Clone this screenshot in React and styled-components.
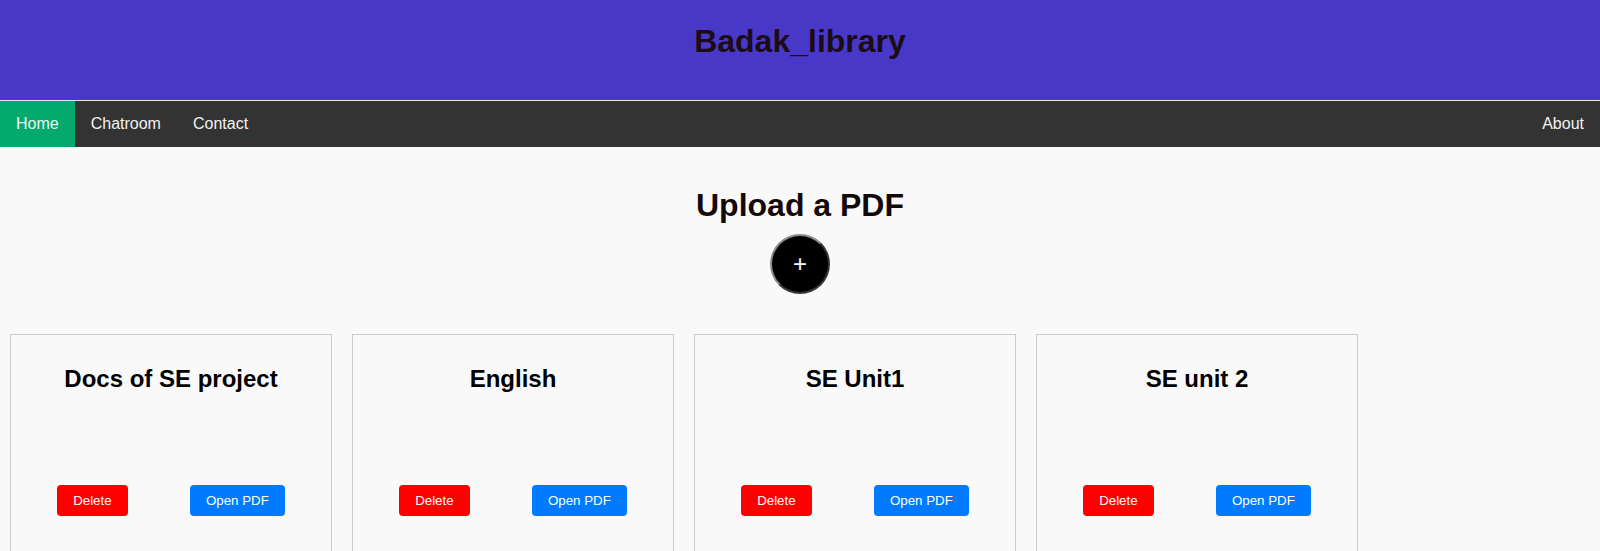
import React from 'react';
import styled, { createGlobalStyle } from 'styled-components';

const GlobalStyle = createGlobalStyle`
  body {
    margin: 0;
    background: #f9f9f9;
    font-family: "Liberation Sans", Arial, sans-serif;
  }
`;

const Header = styled.header`
  height: 77px;
  padding-top: 23px;
  background: #4838c8;
  border-bottom: 1px solid #e6e6f0;
  text-align: center;
`;

const SiteTitle = styled.h1`
  margin: 0;
  font-size: 32px;
  font-weight: bold;
  color: #1c0c14;
`;

const TopNav = styled.nav`
  display: flex;
  background: #333;
`;

const NavLink = styled.a`
  padding: 14px 16px;
  font-size: 16px;
  color: #f2f2f2;
  text-decoration: none;
  background: ${props => props.active ? '#04aa6d' : 'transparent'};
  margin-left: ${props => props.right ? 'auto' : '0'};
  cursor: pointer;
`;

const UploadSection = styled.section`
  padding-top: 40px;
  margin-bottom: 30px;
  display: flex;
  flex-direction: column;
  align-items: center;
`;

const UploadTitle = styled.h1`
  margin: 0 0 10px;
  font-size: 32px;
  color: #140808;
`;

const AddButton = styled.button`
  width: 60px;
  height: 60px;
  border-radius: 50%;
  background: #000;
  border: 2px outset #8a8a8a;
  color: #fff;
  font-size: 24px;
  font-family: "Liberation Sans", Arial, sans-serif;
  padding: 0;
  cursor: pointer;
`;

const CardList = styled.div`
  display: flex;
  flex-wrap: wrap;
`;

const Card = styled.div`
  box-sizing: border-box;
  width: 322px;
  margin: 10px;
  padding: 10px 15px;
  border: 1px solid #ccc;
  text-align: center;
`;

const CardTitle = styled.h2`
  margin: 20px 0 0;
  font-size: 24px;
  color: #000;
`;

const Actions = styled.div`
  display: flex;
  justify-content: space-around;
  margin: 92px 0 40px;
`;

const ActionButton = styled.button`
  padding: 8px 16px;
  border: none;
  border-radius: 4px;
  font-family: "Liberation Sans", Arial, sans-serif;
  font-size: 13.333px;
  color: #fff;
  background: ${props => props.danger ? '#ff0000' : '#007bff'};
  cursor: pointer;
`;

const pdfs = ['Docs of SE project', 'English', 'SE Unit1', 'SE unit 2'];

export default function App() {
  return (
    <>
      <GlobalStyle />
      <Header>
        <SiteTitle>Badak_library</SiteTitle>
      </Header>
      <TopNav>
        <NavLink active>Home</NavLink>
        <NavLink>Chatroom</NavLink>
        <NavLink>Contact</NavLink>
        <NavLink right>About</NavLink>
      </TopNav>
      <UploadSection>
        <UploadTitle>Upload a PDF</UploadTitle>
        <AddButton>+</AddButton>
      </UploadSection>
      <CardList>
        {pdfs.map(name => (
          <Card key={name}>
            <CardTitle>{name}</CardTitle>
            <Actions>
              <ActionButton danger>Delete</ActionButton>
              <ActionButton>Open PDF</ActionButton>
            </Actions>
          </Card>
        ))}
      </CardList>
    </>
  );
}
